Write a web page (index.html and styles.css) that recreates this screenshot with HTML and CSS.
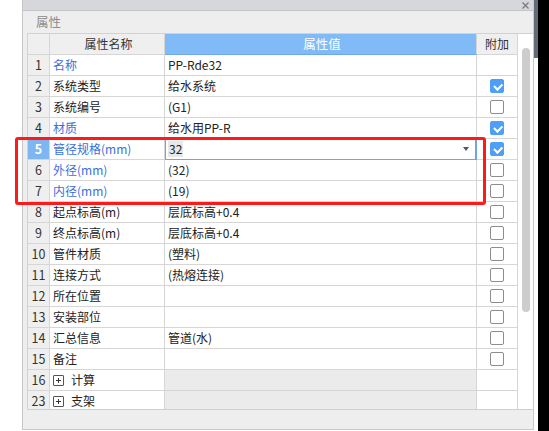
FILE: index.html
```html
<!DOCTYPE html>
<html lang="zh">
<head>
<meta charset="utf-8">
<link rel="stylesheet" href="styles.css">
</head>
<body>
<div class="page">
  <div class="left-strip"></div>
  <div class="panel">
    <div class="topbar">
      <svg class="close" width="7" height="7" viewBox="0 0 7 7"><path d="M0.5 0.5L6.5 6.5M6.5 0.5L0.5 6.5" stroke="#7a7a7a" stroke-width="1.3"/></svg>
    </div>
    <div class="title">属性</div>
    <div class="viewport">
      <div class="grid">
        <div class="c num hd"></div>
        <div class="c name hd center">属性名称</div>
        <div class="c val hd-blue center">属性值</div>
        <div class="c add hd center">附加</div>

        <div class="c num">1</div><div class="c name blue">名称</div><div class="c val">PP-Rde32</div><div class="c add"></div>
        <div class="c num">2</div><div class="c name">系统类型</div><div class="c val">给水系统</div><div class="c add"><span class="cb on"></span></div>
        <div class="c num">3</div><div class="c name">系统编号</div><div class="c val">(G1)</div><div class="c add"><span class="cb"></span></div>
        <div class="c num">4</div><div class="c name blue">材质</div><div class="c val">给水用PP-R</div><div class="c add"><span class="cb on"></span></div>
        <div class="c num sel">5</div><div class="c name blue">管径规格(mm)</div><div class="c val editing"><span class="hl">32</span><span class="arrow"></span></div><div class="c add"><span class="cb on"></span></div>
        <div class="c num">6</div><div class="c name blue">外径(mm)</div><div class="c val">(32)</div><div class="c add"><span class="cb"></span></div>
        <div class="c num">7</div><div class="c name blue">内径(mm)</div><div class="c val">(19)</div><div class="c add"><span class="cb"></span></div>
        <div class="c num">8</div><div class="c name">起点标高(m)</div><div class="c val">层底标高+0.4</div><div class="c add"><span class="cb"></span></div>
        <div class="c num">9</div><div class="c name">终点标高(m)</div><div class="c val">层底标高+0.4</div><div class="c add"><span class="cb"></span></div>
        <div class="c num">10</div><div class="c name">管件材质</div><div class="c val">(塑料)</div><div class="c add"><span class="cb"></span></div>
        <div class="c num">11</div><div class="c name">连接方式</div><div class="c val">(热熔连接)</div><div class="c add"><span class="cb"></span></div>
        <div class="c num">12</div><div class="c name">所在位置</div><div class="c val"></div><div class="c add"><span class="cb"></span></div>
        <div class="c num">13</div><div class="c name">安装部位</div><div class="c val"></div><div class="c add"><span class="cb"></span></div>
        <div class="c num">14</div><div class="c name">汇总信息</div><div class="c val">管道(水)</div><div class="c add"><span class="cb"></span></div>
        <div class="c num">15</div><div class="c name">备注</div><div class="c val"></div><div class="c add"><span class="cb"></span></div>
        <div class="c num">16</div><div class="c name"><span class="plus"></span>计算</div><div class="c val grey"></div><div class="c add"></div>
        <div class="c num">23</div><div class="c name"><span class="plus"></span>支架</div><div class="c val grey"></div><div class="c add"></div>
      </div>
      <div class="scroll"><div class="thumb"></div></div>
    </div>
    <div class="footer"></div>
  </div>
  <div class="edge">
    <div class="slate"><div class="slate-top"></div></div>
    <div class="black"></div>
  </div>
  <div class="redbox"></div>
</div>
</body>
</html>
```

FILE: styles.css
```css
* { box-sizing: border-box; }
html, body { margin: 0; padding: 0; background: #fff; }
body {
  font-family: "Noto Sans CJK SC", "Noto Sans", sans-serif;
  font-size: 12px;
  color: #222;
}
.page {
  position: relative;
  width: 549px;
  height: 431px;
  display: flex;
  overflow: hidden;
}
.left-strip {
  width: 23px;
  border-right: 1px solid #c6c6c6;
  height: 430px;
}
.panel {
  width: 511px;
  height: 430px;
  background: #eeeeee;
  border-right: 1px solid #c9c9c9;
  border-bottom: 1px solid #c9c9c9;
  display: flex;
  flex-direction: column;
}
.topbar {
  height: 11px;
  background: #d6d7db;
  border-bottom: 1px solid #c4c5c9;
  display: flex;
  justify-content: flex-end;
  align-items: center;
  padding-right: 4px;
}
.close { display: block; }
.title {
  height: 22px;
  line-height: 22px;
  padding-left: 13px;
  color: #8c8c8c;
  font-size: 12.5px;
}
.viewport {
  margin-left: 4px;
  height: 377px;
  border-top: 1px solid #d2d2d2;
  border-bottom: 1px solid #cfcfcf;
  border-left: 1px solid #d2d2d2;
  display: flex;
  overflow: hidden;
  flex: none;
}
.grid {
  display: grid;
  grid-template-columns: 22px 115px 312px 41px;
  grid-auto-rows: 21px;
  align-content: start;
  width: 490px;
  background: #fff;
}
.c {
  border-right: 1px solid #d6d6d6;
  border-bottom: 1px solid #d6d6d6;
  display: flex;
  align-items: center;
  white-space: nowrap;
  overflow: hidden;
  line-height: 20px;
}
.num {
  background: #efefef;
  justify-content: center;
  color: #333;
  font-size: 12.5px;
}
.num.sel {
  background: #7db6f1;
  color: #fff;
  font-weight: bold;
}
.hd { background: #efefef; color: #333; }
.hd-blue {
  background: #80bbf7;
  color: #fff;
  border-bottom-color: #6fa8e8;
  font-size: 12.5px;
}
.center { justify-content: center; }
.name { padding-left: 3px; }
.val { padding-left: 3px; position: relative; }
.blue { color: #3a6fdc; }
.grey { background: #ebebeb; }
.add { justify-content: center; }
.editing {
  border-right: 2px solid #6ea6e3;
  border-bottom: 1px solid #6ea6e3;
  box-shadow: inset 1px 1px 0 #6ea6e3;
}
.hl {
  background: #e8e8e8;
  padding: 0 1px;
  line-height: 16px;
}
.arrow {
  position: absolute;
  right: 6px;
  top: 8px;
  width: 0;
  height: 0;
  border-left: 3.5px solid transparent;
  border-right: 3.5px solid transparent;
  border-top: 4px solid #555;
}
.cb {
  width: 14px;
  height: 14px;
  border: 1px solid #8d8d8d;
  border-radius: 2px;
  background: #fff;
  position: relative;
}
.cb.on {
  background: #4f9ff6;
  border-color: #4f9ff6;
}
.cb.on::after {
  content: "";
  position: absolute;
  left: 3px;
  top: 2px;
  width: 6px;
  height: 3.5px;
  border-left: 2px solid #fff;
  border-bottom: 2px solid #fff;
  transform: rotate(-45deg);
  transform-origin: center;
  top: 3px;
}
.plus {
  width: 11px;
  height: 11px;
  border: 1px solid #555;
  border-radius: 1px;
  margin-right: 7px;
  position: relative;
  flex: none;
}
.plus::before, .plus::after {
  content: "";
  position: absolute;
  background: #333;
}
.plus::before { left: 2px; right: 2px; top: 4px; height: 1px; }
.plus::after { top: 2px; bottom: 2px; left: 4px; width: 1px; }
.scroll {
  width: 15px;
  background: #fff;
  padding-top: 14px;
  display: flex;
  justify-content: center;
  padding-left: 0;
}
.thumb {
  width: 8px;
  height: 264px;
  background: #cdcdcd;
  border-radius: 4px;
}
.footer { flex: 1; }
.edge {
  width: 15px;
  height: 431px;
  display: flex;
}
.slate { width: 4px; background: #fff; }
.slate-top { height: 58px; background: #646b76; }
.black { flex: 1; background: #000; }
.redbox {
  position: absolute;
  left: 15px;
  top: 137px;
  width: 471px;
  height: 68px;
  border: 3px solid #ff1a1a;
  border-radius: 3px;
}
```
